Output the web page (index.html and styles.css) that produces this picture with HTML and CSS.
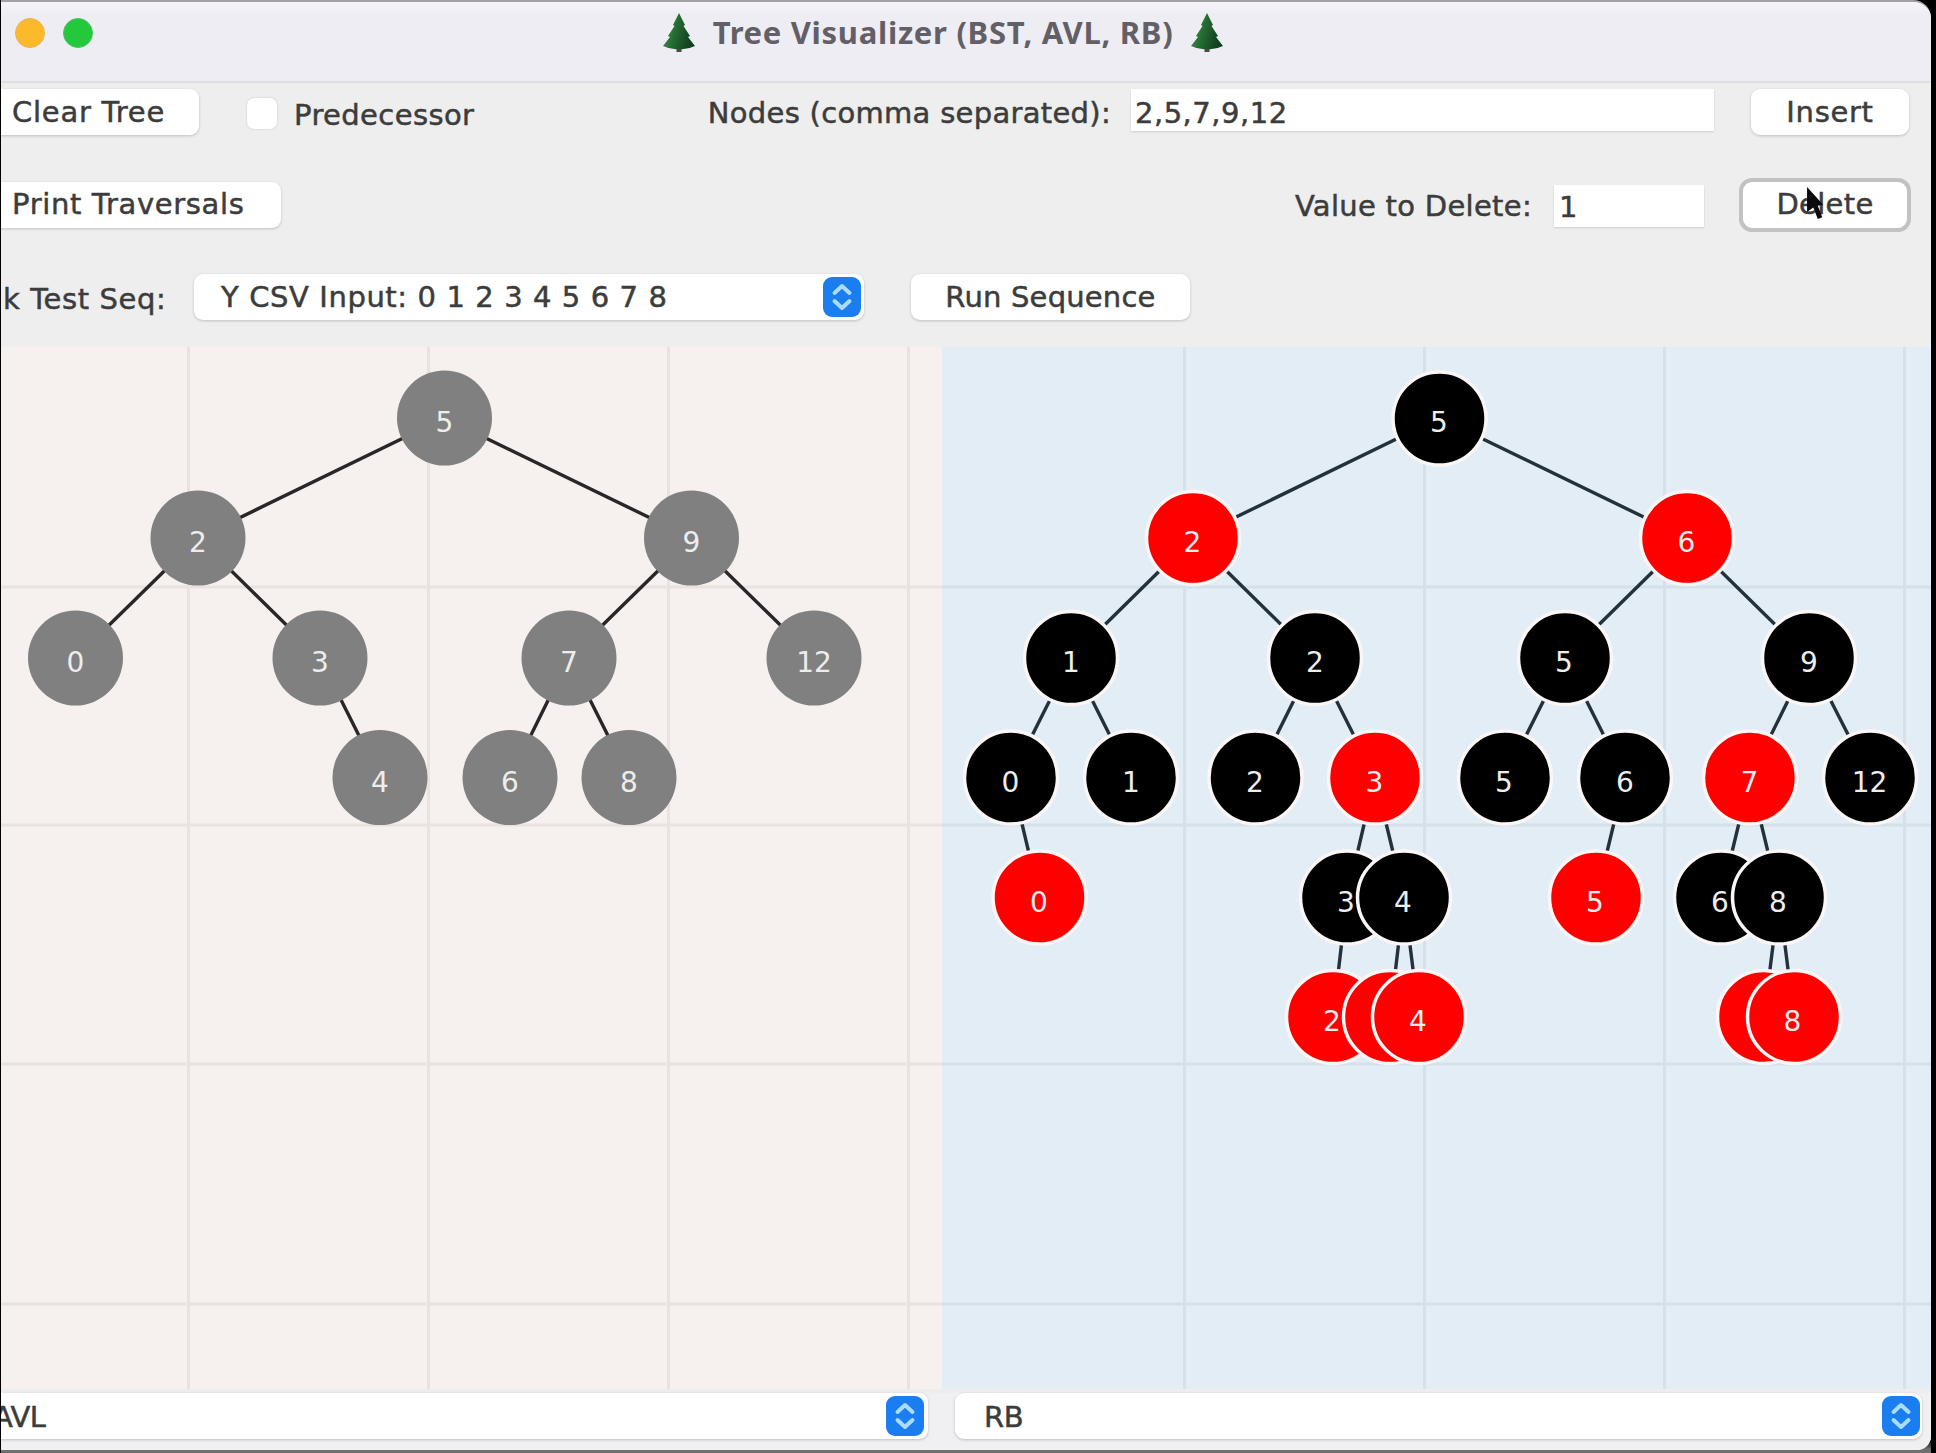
FILE: index.html
```html
<!DOCTYPE html>
<html lang="en">
<head>
<meta charset="utf-8">
<title>Tree Visualizer (BST, AVL, RB)</title>
<link rel="stylesheet" href="styles.css">
</head>
<body>
<svg class="defs" width="0" height="0" aria-hidden="true">
  <defs>
    <linearGradient id="leaf" x1="0" x2="1" y1="0" y2="0.3">
      <stop offset="0" stop-color="#4f9a58"/><stop offset="0.5" stop-color="#236b31"/><stop offset="1" stop-color="#123f20"/>
    </linearGradient>
    <symbol id="pine" viewBox="0 0 32 40">
      <path d="M13.5 33h5v6h-5z" fill="#4d4a35"/>
      <path d="M16 0 L22 12 L20.500 13 L27 23 L25 24 L32 33 Q24 37 16 36 Q8 37 0 33 L7 24 L5 23 L11.500 13 L10 12 Z" fill="url(#leaf)"/>
    </symbol>
    <symbol id="updown" viewBox="0 0 38 40">
      <rect width="38" height="40" rx="9" fill="#1a7df0"/>
      <path d="M11.500 16 L19 9 L26.500 16 M11.500 24 L19 31 L26.500 24" fill="none" stroke="#a9dcff" stroke-width="4" stroke-linecap="round" stroke-linejoin="round"/>
    </symbol>
  </defs>
</svg>
<div class="window">
  <header class="titlebar">
    <div class="lights"><span class="light amber"></span><span class="light green"></span></div>
    <div class="title">
      <svg class="pine"><use href="#pine"/></svg>
      <h1>Tree Visualizer (BST, AVL, RB)</h1>
      <svg class="pine"><use href="#pine"/></svg>
    </div>
  </header>

  <section class="toolbar">
    <div class="row">
      <button class="btn clear">Clear Tree</button>
      <label class="check"><span class="box"></span><span class="t-pred">Predecessor</span></label>
      <span class="spacer"></span>
      <span class="label t-nodes">Nodes (comma separated):</span>
      <div class="field nodes">2,5,7,9,12</div>
      <button class="btn insert">Insert</button>
    </div>
    <div class="row">
      <button class="btn print">Print Traversals</button>
      <span class="spacer"></span>
      <span class="label t-value">Value to Delete:</span>
      <div class="field value">1</div>
      <button class="btn delete">Delete
        <svg class="cursor" viewBox="0 0 22 38"><path d="M1 1 L19 21 L13 22 L18 35 L13 37 L8 24 L1 29 Z" fill="#0a0a0a"/></svg>
      </button>
    </div>
    <div class="row">
      <span class="label t-seq">k Test Seq:</span>
      <div class="select seq"><span>Y CSV Input: 0 1 2 3 4 5 6 7 8</span><svg class="arrows"><use href="#updown"/></svg></div>
      <button class="btn run">Run Sequence</button>
    </div>
  </section>

  <main class="panes">
    <svg class="pane avl" viewBox="1 347 941 1042">
      <path class="grid" d="M188.500 347V1389M428.500 347V1389M668.500 347V1389M908.500 347V1389M1 587H942M1 825H942M1 1064H942M1 1304H942"/>
      <path class="edge" d="M444.500 418L198 538M444.500 418L691.500 538M198 538L75.500 658M198 538L320 658M691.500 538L569 658M691.500 538L814 658M320 658L380 777.500M569 658L510 777.500M569 658L629 777.500"/>
      <g class="gray">
        <circle cx="444.500" cy="418" r="47.500"/><circle cx="198" cy="538" r="47.500"/><circle cx="691.500" cy="538" r="47.500"/>
        <circle cx="75.500" cy="658" r="47.500"/><circle cx="320" cy="658" r="47.500"/><circle cx="569" cy="658" r="47.500"/><circle cx="814" cy="658" r="47.500"/>
        <circle cx="380" cy="777.500" r="47.500"/><circle cx="510" cy="777.500" r="47.500"/><circle cx="629" cy="777.500" r="47.500"/>
      </g>
      <g class="num">
        <text x="444.500" y="432">5</text><text x="198" y="552">2</text><text x="691.500" y="552">9</text>
        <text x="75.500" y="672">0</text><text x="320" y="672">3</text><text x="569" y="672">7</text><text x="814" y="672">12</text>
        <text x="380" y="791.500">4</text><text x="510" y="791.500">6</text><text x="629" y="791.500">8</text>
      </g>
    </svg>
    <svg class="pane rb" viewBox="942 347 989 1042">
      <path class="grid" d="M1184.500 347V1389M1424.500 347V1389M1664.500 347V1389M1904.500 347V1389M942 587H1931M942 825H1931M942 1064H1931M942 1304H1931"/>
      <path class="edge" d="M1439.500 418L1193 538M1439.500 418L1687 538M1193 538L1071 658M1193 538L1315 658M1687 538L1565 658M1687 538L1809 658M1071 658L1011 777.500M1071 658L1131 777.500M1315 658L1255.500 777.500M1315 658L1375 777.500M1565 658L1505 777.500M1565 658L1625 777.500M1809 658L1750 777.500M1809 658L1870 777.500M1011 777.500L1039.500 897.500M1375 777.500L1347 897.500M1375 777.500L1404 897.500M1625 777.500L1596 897.500M1750 777.500L1721 897.500M1750 777.500L1779 897.500M1347 897.500L1333 1017M1404 897.500L1390 1017M1404 897.500L1419 1017M1779 897.500L1764 1017M1779 897.500L1794 1017"/>
      <g class="num ring">
        <circle class="b" cx="1439.500" cy="418.500" r="46.500"/><text x="1439" y="432">5</text>
        <circle class="r" cx="1193" cy="538" r="46.500"/><text x="1192.500" y="552">2</text>
        <circle class="r" cx="1687" cy="538" r="46.500"/><text x="1686.500" y="552">6</text>
        <circle class="b" cx="1071" cy="658" r="46.500"/><text x="1071" y="672">1</text>
        <circle class="b" cx="1315" cy="658" r="46.500"/><text x="1315" y="672">2</text>
        <circle class="b" cx="1565" cy="658" r="46.500"/><text x="1564" y="672">5</text>
        <circle class="b" cx="1809" cy="658" r="46.500"/><text x="1809" y="672">9</text>
        <circle class="b" cx="1011" cy="777.500" r="46.500"/><text x="1010.500" y="791.500">0</text>
        <circle class="b" cx="1131" cy="777.500" r="46.500"/><text x="1131" y="791.500">1</text>
        <circle class="b" cx="1255.500" cy="777.500" r="46.500"/><text x="1255" y="791.500">2</text>
        <circle class="r" cx="1375" cy="777.500" r="46.500"/><text x="1374.500" y="791.500">3</text>
        <circle class="b" cx="1505" cy="777.500" r="46.500"/><text x="1504" y="791.500">5</text>
        <circle class="b" cx="1625" cy="777.500" r="46.500"/><text x="1625" y="791.500">6</text>
        <circle class="r" cx="1750" cy="777.500" r="46.500"/><text x="1749.500" y="791.500">7</text>
        <circle class="b" cx="1870" cy="777.500" r="46.500"/><text x="1869.500" y="791.500">12</text>
        <circle class="r" cx="1039.500" cy="897.500" r="46.500"/><text x="1039" y="911.500">0</text>
        <circle class="b" cx="1347" cy="897.500" r="46.500"/><text x="1346" y="911.500">3</text>
        <circle class="b" cx="1404" cy="897.500" r="46.500"/><text x="1403" y="911.500">4</text>
        <circle class="r" cx="1596" cy="897.500" r="46.500"/><text x="1595" y="911.500">5</text>
        <circle class="b" cx="1721" cy="897.500" r="46.500"/><text x="1720" y="911.500">6</text>
        <circle class="b" cx="1779" cy="897.500" r="46.500"/><text x="1778" y="911.500">8</text>
        <circle class="r" cx="1333" cy="1017" r="46.500"/><text x="1332" y="1031">2</text>
        <circle class="r" cx="1390" cy="1017" r="46.500"/>
        <circle class="r" cx="1419" cy="1017" r="46.500"/><text x="1418" y="1031">4</text>
        <circle class="r" cx="1764" cy="1017" r="46.500"/>
        <circle class="r" cx="1794" cy="1017" r="46.500"/><text x="1792.500" y="1031">8</text>
      </g>
    </svg>
  </main>

  <footer class="pickers">
    <div class="select left"><span>AVL</span><svg class="arrows"><use href="#updown"/></svg></div>
    <div class="select right"><span>RB</span><svg class="arrows"><use href="#updown"/></svg></div>
  </footer>
</div>
</body>
</html>
```
FILE: styles.css
```css
* { box-sizing: border-box; }
html, body { margin: 0; height: 1453px; overflow: hidden; }
body {
  background: linear-gradient(#000 0 1440px, #707070 1449px);
  border-left: 1px solid #000;
  border-right: 5px solid #000;
  font-family: "DejaVu Sans", sans-serif;
  font-size: 29px;
  color: #3c3c3c;
  -webkit-text-stroke: 0.5px;
}
.defs { display: block; position: absolute; }

.window {
  height: 1450px;
  display: flex;
  flex-direction: column;
  background: #eee;
  border-top: 2px solid #a3a1a5;
  border-radius: 0 18px 14px 0;
  overflow: hidden;
}

/* Title bar */
.titlebar {
  height: 81px;
  flex: none;
  display: grid;
  grid-template-columns: 662px auto;
  background: linear-gradient(#f5f4f8, #efedf4 14px);
  border-bottom: 2px solid #dfdee1;
  -webkit-text-stroke: 0;
}
.lights { display: flex; gap: 18px; padding: 16px 0 0 14px; }
.light { width: 30px; height: 30px; border-radius: 50%; }
.amber { background: #fdb92c; border: 1px solid #efb250; }
.green { background: #23c83c; border: 1px solid #4dc462; }
.title { display: flex; align-items: flex-start; }
.title h1 {
  margin: 11px 0 0;
  width: 496px;
  text-align: center;
  font: 700 31px/38px "Noto Sans", sans-serif;
  letter-spacing: 0.7px;
  color: #626066;
  white-space: nowrap;
}
.pine { width: 32px; height: 40px; margin-top: 11px; }

/* Controls */
.toolbar {
  height: 264px;
  flex: none;
  padding-top: 6px;
  display: flex;
  flex-direction: column;
  gap: 46.5px;
}
.row { display: flex; height: 46px; flex: none; white-space: nowrap; }
.spacer { flex: 1; }
.btn {
  flex: none;
  height: 46px;
  border: 0;
  padding: 0;
  border-radius: 9px;
  background: #fff;
  box-shadow: 0 1px 3px #0003;
  font: inherit;
  line-height: 43px;
  color: inherit;
  text-align: center;
}
.label { line-height: 49px; letter-spacing: 0.3px; }
.field { height: 42px; background: #fff; box-shadow: 0 1px 2px #0002; line-height: 48px; padding-left: 4px; letter-spacing: 0.5px; }

.clear { width: 206px; margin-left: -8px; text-align: left; padding-left: 19px; letter-spacing: 0.75px; }
.check { display: flex; margin-left: 48px; line-height: 52px; letter-spacing: 0.4px; }
.box { width: 30px; height: 31px; margin: 9px 17px 0 0; background: #fff; border-radius: 7px; box-shadow: 0 0 2px #0003; }
.nodes { width: 583px; margin-left: 20px; }
.insert { width: 158px; margin: 0 22px 0 37px; letter-spacing: 0.7px; }

.print { width: 288px; margin-left: -8px; text-align: left; padding-left: 19px; letter-spacing: 0.65px; }
.value { width: 150px; margin: 3px 0 0 22px; padding-left: 5px; line-height: 44px; }
.delete {
  position: relative;
  width: 172px;
  height: 54px;
  margin: -4px 20px 0 35px;
  border: 4px solid #c2c2c2;
  border-radius: 13px;
  box-shadow: none;
  letter-spacing: 0.3px;
}
.cursor { position: absolute; left: 63px; top: 4px; width: 20px; height: 34px; }

.t-seq { width: 193px; padding-left: 2px; line-height: 51px; letter-spacing: 0.6px; }
.select { display: flex; align-items: center; height: 46px; background: #fff; border-radius: 9px; box-shadow: 0 1px 3px #0003; }
.arrows { width: 38px; height: 40px; margin-left: auto; flex: none; }
.seq { width: 670px; padding: 0 3px 0 27px; letter-spacing: 0.6px; }
.run { width: 279px; margin-left: 47px; letter-spacing: 0.2px; }

/* Trees */
.panes { display: grid; grid-template-columns: 941px 989px; height: 1046px; flex: none; }
.pane { display: block; width: 100%; height: 1046px; border-bottom: 4px solid #efecee; }
.avl { background: #f6f0ee; }
.rb { background: #e3edf6; }
.grid { fill: none; stroke: #000; stroke-opacity: .055; stroke-width: 3; }
.edge { stroke: #2a2627; stroke-width: 3.4; }
.rb .edge { stroke: #25313a; }
.gray { fill: #808080; }
.num { fill: #ededed; font-size: 28px; text-anchor: middle; }
.ring circle { stroke: #fbf6f6; stroke-width: 3.500; }
.ring .b { fill: #000; }
.ring .r { fill: #fe0000; }

/* Tree type pickers */
.pickers { display: flex; height: 57px; gap: 27px; background: #f0eff1; }
.pickers span { padding-top: 2px; letter-spacing: -0.5px; }
.left { width: 935px; margin-left: -8px; padding-right: 4px; }
.right { width: 967px; padding: 0 2px 0 29px; }
```
